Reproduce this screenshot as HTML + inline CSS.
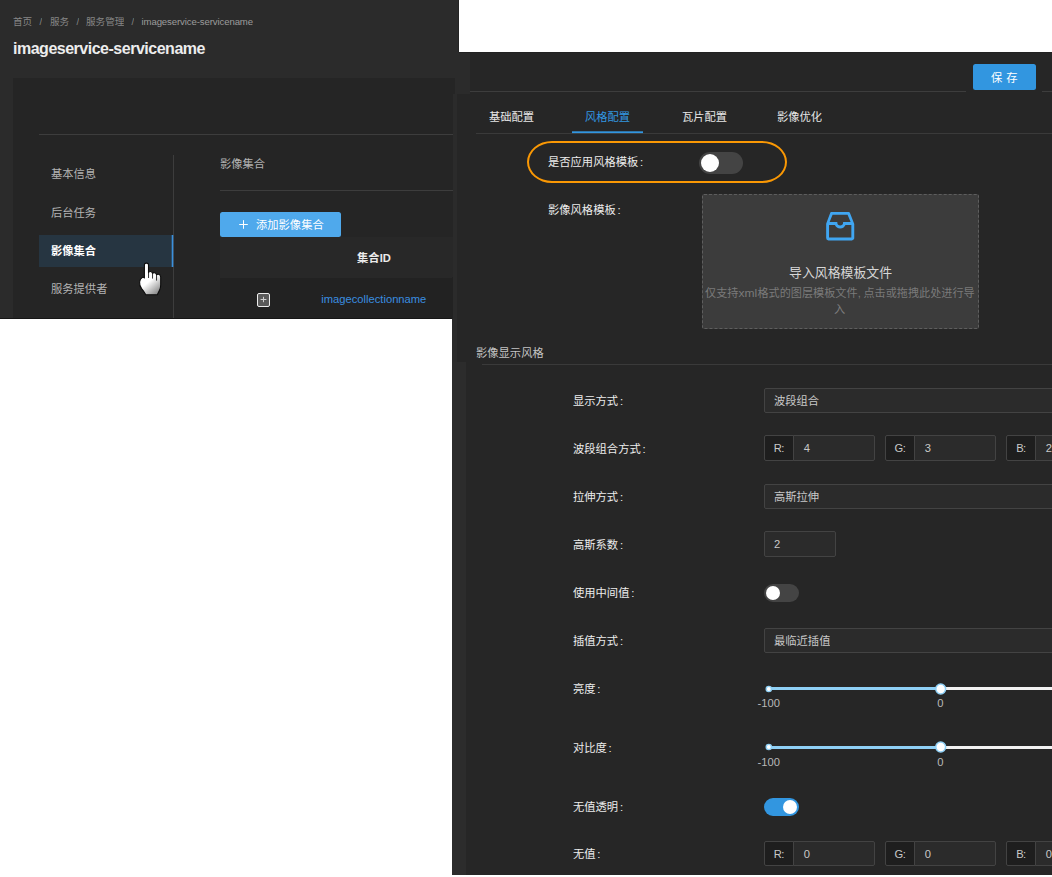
<!DOCTYPE html><html lang="zh"><head><meta charset="utf-8"><title>imageservice-servicename</title><style>html,body{margin:0;padding:0}body{width:1052px;height:877px;background:#fff;position:relative;overflow:hidden;font-family:"Liberation Sans",sans-serif;}div{box-sizing:content-box}svg text{font-family:"Liberation Sans","Noto Sans CJK SC",sans-serif;font-size:1000px}</style></head><body><div style="position:absolute;left:0;top:0;width:459px;height:319px;background:#2b2b2b;overflow:hidden"><svg role="img" aria-label="首页" style="position:absolute;left:13.00px;top:16.80px;" width="19.20" height="12.48" viewBox="0 -880 2000 1300" fill="#868686"><text x="0" y="0">首页</text></svg><svg role="img" aria-label="/" style="position:absolute;left:38.62px;top:16.80px;" width="3.76" height="12.48" viewBox="0 -880 392 1300" fill="#868686"><text x="196" y="0" text-anchor="middle">/</text></svg><svg role="img" aria-label="服务" style="position:absolute;left:49.50px;top:16.80px;" width="19.20" height="12.48" viewBox="0 -880 2000 1300" fill="#868686"><text x="0" y="0">服务</text></svg><svg role="img" aria-label="/" style="position:absolute;left:75.62px;top:16.80px;" width="3.76" height="12.48" viewBox="0 -880 392 1300" fill="#868686"><text x="196" y="0" text-anchor="middle">/</text></svg><svg role="img" aria-label="服务管理" style="position:absolute;left:86.00px;top:16.80px;" width="38.40" height="12.48" viewBox="0 -880 4000 1300" fill="#868686"><text x="0" y="0">服务管理</text></svg><svg role="img" aria-label="/" style="position:absolute;left:130.62px;top:16.80px;" width="3.76" height="12.48" viewBox="0 -880 392 1300" fill="#868686"><text x="196" y="0" text-anchor="middle">/</text></svg><div style="position:absolute;top:15.20px;line-height:14px;font-size:9.6px;font-weight:400;color:#9c9c9c;letter-spacing:-0.11px;white-space:pre;left:141.5px;">imageservice-servicename</div><div style="position:absolute;top:36.60px;line-height:24px;font-size:16px;font-weight:700;color:#ededed;letter-spacing:-0.49px;white-space:pre;left:13px;">imageservice-servicename</div><div style="position:absolute;left:13px;top:78px;width:442px;height:241px;background:#252525;"></div><div style="position:absolute;left:39px;top:134px;width:414px;height:1px;background:#3d3d3d;"></div><div style="position:absolute;left:173px;top:155px;width:1px;height:164px;background:#3d3d3d;"></div><svg role="img" aria-label="基本信息" style="position:absolute;left:51.25px;top:168.10px;" width="45.20" height="14.69" viewBox="0 -880 4000 1300" fill="#b3b3b3"><text x="0" y="0">基本信息</text></svg><svg role="img" aria-label="后台任务" style="position:absolute;left:51.25px;top:207.10px;" width="45.20" height="14.69" viewBox="0 -880 4000 1300" fill="#b3b3b3"><text x="0" y="0">后台任务</text></svg><div style="position:absolute;left:39px;top:235px;width:134px;height:32px;background:#263541;"></div><svg style="position:absolute;left:170px;top:234px" width="5" height="35"><rect x="1.70" y="1.00" width="1.6" height="32" rx="0" fill="#3a90dd"/></svg><svg role="img" aria-label="影像集合" style="position:absolute;left:51.25px;top:245.10px;" width="45.20" height="14.69" viewBox="0 -880 4000 1300" fill="#ffffff"><text x="0" y="0" font-weight="700">影像集合</text></svg><svg role="img" aria-label="服务提供者" style="position:absolute;left:51.25px;top:283.35px;" width="56.50" height="14.69" viewBox="0 -880 5000 1300" fill="#b3b3b3"><text x="0" y="0">服务提供者</text></svg><svg role="img" aria-label="影像集合" style="position:absolute;left:219.50px;top:158.35px;" width="45.20" height="14.69" viewBox="0 -880 4000 1300" fill="#b3b3b3"><text x="0" y="0">影像集合</text></svg><div style="position:absolute;left:220px;top:190px;width:233px;height:1px;background:#3d3d3d;"></div><div style="position:absolute;left:220px;top:212px;width:121px;height:25px;background:#4fa9ec;border-radius:2.5px;"></div><svg style="position:absolute;left:239px;top:220.3px" width="9" height="9" viewBox="0 0 9 9"><path d="M4.5 0.2V8.8M0.2 4.5H8.8" stroke="#fff" stroke-width="1" fill="none"/></svg><svg role="img" aria-label="添加影像集合" style="position:absolute;left:255.75px;top:218.95px;" width="67.80" height="14.69" viewBox="0 -880 6000 1300" fill="#ffffff"><text x="0" y="0">添加影像集合</text></svg><div style="position:absolute;left:220px;top:237px;width:233px;height:40.5px;background:#282828;"></div><div style="position:absolute;left:220px;top:277.5px;width:233px;height:41.5px;background:#222222;"></div><svg role="img" aria-label="集合" style="position:absolute;left:357.00px;top:252.35px;" width="22.60" height="14.69" viewBox="0 -880 2000 1300" fill="#ebebeb"><text x="0" y="0" font-weight="700">集合</text></svg><div style="position:absolute;top:250.00px;line-height:17px;font-size:11.2px;font-weight:700;color:#ebebeb;letter-spacing:-0.2px;white-space:pre;left:379.8px;">ID</div><div style="position:absolute;left:257px;top:293.3px;width:11px;height:11.6px;border:1px solid #ededed;border-radius:2px;background:#5a5a5a"></div><svg style="position:absolute;left:260px;top:296px" width="7" height="7" viewBox="0 0 7 7"><path d="M3.5 0.8V6.2M0.6 3.5H6.4" stroke="#d0d0d0" stroke-width="1" fill="none"/></svg><div style="position:absolute;top:290.50px;line-height:17px;font-size:11.2px;font-weight:400;color:#3a8ee0;letter-spacing:0px;white-space:pre;left:321.25px;">imagecollectionname</div><svg style="position:absolute;left:136px;top:260px" width="30" height="38" viewBox="0 0 30 38">
<defs><linearGradient id="hg" x1="0.2" y1="0" x2="0.75" y2="1"><stop offset="0.55" stop-color="#fff"/><stop offset="1" stop-color="#8c8c8c"/></linearGradient></defs>
<path d="M8.4 5 Q8.4 3.1 10.4 3.1 Q12.5 3.1 12.5 5 L12.5 12.6 Q12.8 11.4 14.5 11.5 Q16.3 11.6 16.5 13.4 Q17 12.5 18.5 12.7 Q20.3 12.9 20.5 14.8 Q21.2 14.1 22.5 14.3 Q24.6 14.7 24.7 17 L24.7 25 Q24.6 28.2 23.6 30 L21.3 34.7 L9.8 34.7 Q8 31.5 5.6 28.6 Q3.2 25.4 3.6 22 Q4 18.6 6.2 17.4 Q7.6 16.8 8.4 18 Z" fill="url(#hg)" stroke="#0c0c0c" stroke-width="1.1" stroke-linejoin="round"/>
<path d="M12.55 12.5V18M16.55 13.5V18.6M20.55 14.9V20.6" stroke="#1a1a1a" stroke-width="0.9" fill="none"/>
</svg><div style="position:absolute;left:0px;top:318px;width:452px;height:1px;background:#161616;"></div><div style="position:absolute;left:458px;top:0px;width:1px;height:52px;background:#242424;"></div></div><div style="position:absolute;left:452px;top:52px;width:600px;height:823px;background:#2b2b2b;overflow:hidden"><div style="position:absolute;left:-452px;top:-52px;width:1052px;height:877px"><div style="position:absolute;left:470px;top:52px;width:582px;height:42px;background:#262626;"></div><div style="position:absolute;left:459px;top:52px;width:593px;height:1px;background:#222222;"></div><div style="position:absolute;left:457px;top:94px;width:595px;height:781px;background:#262626;"></div><div style="position:absolute;left:452px;top:362px;width:14px;height:513px;background:#2c2c2c;"></div><div style="position:absolute;left:470px;top:91px;width:496px;height:1px;background:#3d3d3d;"></div><div style="position:absolute;left:1042px;top:91px;width:10px;height:1px;background:#3d3d3d;"></div><div style="position:absolute;left:973px;top:64px;width:63px;height:26px;background:#3296e0;border-radius:2.5px;"></div><svg role="img" aria-label="保存" style="position:absolute;left:991.36px;top:71.65px;" width="26.49" height="14.69" viewBox="0 -880 2344 1300" fill="#ffffff"><text x="0" y="0" letter-spacing="344">保存</text></svg><svg role="img" aria-label="基础配置" style="position:absolute;left:489.25px;top:111.45px;" width="45.20" height="14.69" viewBox="0 -880 4000 1300" fill="#e6e6e6"><text x="0" y="0">基础配置</text></svg><svg role="img" aria-label="风格配置" style="position:absolute;left:584.75px;top:111.45px;" width="45.20" height="14.69" viewBox="0 -880 4000 1300" fill="#3296e0"><text x="0" y="0">风格配置</text></svg><svg role="img" aria-label="瓦片配置" style="position:absolute;left:681.50px;top:111.45px;" width="45.20" height="14.69" viewBox="0 -880 4000 1300" fill="#e6e6e6"><text x="0" y="0">瓦片配置</text></svg><svg role="img" aria-label="影像优化" style="position:absolute;left:776.75px;top:111.45px;" width="45.20" height="14.69" viewBox="0 -880 4000 1300" fill="#e6e6e6"><text x="0" y="0">影像优化</text></svg><div style="position:absolute;left:476px;top:133px;width:576px;height:1px;background:#3a3a3a;"></div><svg style="position:absolute;left:571px;top:130px" width="74" height="5"><rect x="1.00" y="1.30" width="71" height="1.8" rx="0" fill="#3296e0"/></svg><div style="position:absolute;left:527px;top:141px;width:256.4px;height:38.2px;border:2.2px solid #fa9804;border-radius:25px / 21px"></div><svg role="img" aria-label="是否应用风格模板:" style="position:absolute;left:548.00px;top:156.15px;" width="95.24" height="14.69" viewBox="0 -880 8428 1300" fill="#ececec"><text x="0" y="0">是否应用风格模板<tspan x="8150">:</tspan></text></svg><div style="position:absolute;left:699px;top:152px;width:44px;height:22px;background:#444444;border-radius:11px;"></div><div style="position:absolute;left:701px;top:154px;width:18px;height:18px;background:#ffffff;border-radius:9px;"></div><svg role="img" aria-label="影像风格模板:" style="position:absolute;left:548.00px;top:204.15px;" width="72.64" height="14.69" viewBox="0 -880 6428 1300" fill="#ececec"><text x="0" y="0">影像风格模板<tspan x="6150">:</tspan></text></svg><div style="position:absolute;left:702px;top:193.6px;width:275px;height:133px;border:1px dashed #5e5e5e;border-radius:2px;background:#3c3c3c"></div><svg style="position:absolute;left:820.9px;top:207.1px" width="38.4" height="38.4" viewBox="0 0 1024 1024" fill="#40a6f2"><path d="M885.2 446.3l-.2-.8-112.2-285.1c-5-16.100-19.900-27.200-36.800-27.200H281.200c-17 0-32.100 11.300-36.900 27.600L139.400 443l-.3.700-.2.800c-1.300 4.900-1.700 9.900-1 14.800-.1 1.600-.2 3.200-.2 4.800V830a60.900 60.900 0 0 0 60.800 60.800h627.200c33.500 0 60.800-27.300 60.900-60.800V464.100c0-1.300 0-2.600-.1-3.700.4-4.900 0-9.600-1.300-14.100zm-295.800-43l-.3 15.700c-.8 44.900-31.800 75.100-77.100 75.100-22.100 0-41.100-7.100-54.800-20.600S436 441.200 435.600 419l-.3-15.700H229.500L309 210h399.200l81.700 193.300H589.400zm-375 76.800h157.300c24.300 57.100 76 90.800 140.400 90.800 33.700 0 65-9.400 90.300-27.200 22.200-15.600 39.500-37.400 50.700-63.600h156.500V814H214.400V480.100z"/></svg><svg role="img" aria-label="导入风格模板文件" style="position:absolute;left:788.90px;top:265.55px;" width="103.20" height="16.77" viewBox="0 -880 8000 1300" fill="#d6d6d6"><text x="0" y="0">导入风格模板文件</text></svg><svg role="img" aria-label="仅支持xml格式的图层模板文件, 点击或拖拽此处进行导" style="position:absolute;left:705.23px;top:287.23px;" width="269.94" height="14.50" viewBox="0 -880 24210 1300" fill="#7a7a7a"><text x="0" y="0">仅支持<tspan x="3000" textLength="1683" lengthAdjust="spacingAndGlyphs">xml</tspan><tspan x="4708">格式的图层模板文件</tspan><tspan x="13708">,</tspan><tspan x="14210">点击或拖拽此处进行导</tspan></text></svg><svg role="img" aria-label="入" style="position:absolute;left:834.40px;top:302.90px;" width="11.20" height="14.56" viewBox="0 -880 1000 1300" fill="#7d7d7d"><text x="0" y="0">入</text></svg><svg role="img" aria-label="影像显示风格" style="position:absolute;left:476.25px;top:346.95px;" width="67.80" height="14.69" viewBox="0 -880 6000 1300" fill="#c4c4c4"><text x="0" y="0">影像显示风格</text></svg><div style="position:absolute;left:482px;top:364px;width:570px;height:1px;background:#3a3a3a;"></div><svg role="img" aria-label="显示方式:" style="position:absolute;left:573.00px;top:395.10px;" width="50.04" height="14.69" viewBox="0 -880 4428 1300" fill="#ececec"><text x="0" y="0">显示方式<tspan x="4150">:</tspan></text></svg><svg role="img" aria-label="波段组合方式:" style="position:absolute;left:573.00px;top:442.60px;" width="72.64" height="14.69" viewBox="0 -880 6428 1300" fill="#ececec"><text x="0" y="0">波段组合方式<tspan x="6150">:</tspan></text></svg><svg role="img" aria-label="拉伸方式:" style="position:absolute;left:573.00px;top:490.85px;" width="50.04" height="14.69" viewBox="0 -880 4428 1300" fill="#ececec"><text x="0" y="0">拉伸方式<tspan x="4150">:</tspan></text></svg><svg role="img" aria-label="高斯系数:" style="position:absolute;left:573.00px;top:538.85px;" width="50.04" height="14.69" viewBox="0 -880 4428 1300" fill="#ececec"><text x="0" y="0">高斯系数<tspan x="4150">:</tspan></text></svg><svg role="img" aria-label="使用中间值:" style="position:absolute;left:573.00px;top:586.85px;" width="61.34" height="14.69" viewBox="0 -880 5428 1300" fill="#ececec"><text x="0" y="0">使用中间值<tspan x="5150">:</tspan></text></svg><svg role="img" aria-label="插值方式:" style="position:absolute;left:573.00px;top:635.10px;" width="50.04" height="14.69" viewBox="0 -880 4428 1300" fill="#ececec"><text x="0" y="0">插值方式<tspan x="4150">:</tspan></text></svg><svg role="img" aria-label="亮度:" style="position:absolute;left:573.00px;top:683.10px;" width="27.44" height="14.69" viewBox="0 -880 2428 1300" fill="#ececec"><text x="0" y="0">亮度<tspan x="2150">:</tspan></text></svg><svg role="img" aria-label="对比度:" style="position:absolute;left:573.00px;top:741.85px;" width="38.74" height="14.69" viewBox="0 -880 3428 1300" fill="#ececec"><text x="0" y="0">对比度<tspan x="3150">:</tspan></text></svg><svg role="img" aria-label="无值透明:" style="position:absolute;left:573.00px;top:800.60px;" width="50.04" height="14.69" viewBox="0 -880 4428 1300" fill="#ececec"><text x="0" y="0">无值透明<tspan x="4150">:</tspan></text></svg><svg role="img" aria-label="无值:" style="position:absolute;left:573.00px;top:848.35px;" width="27.44" height="14.69" viewBox="0 -880 2428 1300" fill="#ececec"><text x="0" y="0">无值<tspan x="2150">:</tspan></text></svg><div style="position:absolute;left:764.25px;top:388.0px;width:320px;height:23.4px;border:1px solid #434343;border-radius:2px;background:#2b2b2b"></div><svg role="img" aria-label="波段组合" style="position:absolute;left:773.75px;top:395.25px;" width="45.20" height="14.69" viewBox="0 -880 4000 1300" fill="#c8c8c8"><text x="0" y="0">波段组合</text></svg><div style="position:absolute;left:764.25px;top:435.3px;width:27.5px;height:23.4px;border:1px solid #434343;border-radius:2px 0 0 2px;background:#1e1e1e"></div><div style="position:absolute;left:792.95px;top:435.3px;width:80px;height:23.4px;border:1px solid #434343;border-radius:0 2px 2px 0;background:#2b2b2b"></div><div style="position:absolute;top:440.40px;line-height:17px;font-size:11.2px;font-weight:400;color:#c8c8c8;letter-spacing:-0.6px;white-space:pre;left:678.85px;width:200px;text-align:center;">R:</div><div style="position:absolute;top:440.40px;line-height:17px;font-size:11.2px;font-weight:400;color:#c8c8c8;letter-spacing:0px;white-space:pre;left:803.75px;">4</div><div style="position:absolute;left:885.25px;top:435.3px;width:27.5px;height:23.4px;border:1px solid #434343;border-radius:2px 0 0 2px;background:#1e1e1e"></div><div style="position:absolute;left:913.95px;top:435.3px;width:80px;height:23.4px;border:1px solid #434343;border-radius:0 2px 2px 0;background:#2b2b2b"></div><div style="position:absolute;top:440.40px;line-height:17px;font-size:11.2px;font-weight:400;color:#c8c8c8;letter-spacing:-0.6px;white-space:pre;left:799.85px;width:200px;text-align:center;">G:</div><div style="position:absolute;top:440.40px;line-height:17px;font-size:11.2px;font-weight:400;color:#c8c8c8;letter-spacing:0px;white-space:pre;left:924.75px;">3</div><div style="position:absolute;left:1006.25px;top:435.3px;width:27.5px;height:23.4px;border:1px solid #434343;border-radius:2px 0 0 2px;background:#1e1e1e"></div><div style="position:absolute;left:1034.95px;top:435.3px;width:80px;height:23.4px;border:1px solid #434343;border-radius:0 2px 2px 0;background:#2b2b2b"></div><div style="position:absolute;top:440.40px;line-height:17px;font-size:11.2px;font-weight:400;color:#c8c8c8;letter-spacing:-0.6px;white-space:pre;left:920.85px;width:200px;text-align:center;">B:</div><div style="position:absolute;top:440.40px;line-height:17px;font-size:11.2px;font-weight:400;color:#c8c8c8;letter-spacing:0px;white-space:pre;left:1045.75px;">2</div><div style="position:absolute;left:764.25px;top:484.0px;width:320px;height:23.4px;border:1px solid #434343;border-radius:2px;background:#2b2b2b"></div><svg role="img" aria-label="高斯拉伸" style="position:absolute;left:773.75px;top:491.25px;" width="45.20" height="14.69" viewBox="0 -880 4000 1300" fill="#c8c8c8"><text x="0" y="0">高斯拉伸</text></svg><div style="position:absolute;left:764.25px;top:531px;width:69.5px;height:24px;border:1px solid #434343;border-radius:2px;background:#2b2b2b"></div><div style="position:absolute;top:536.40px;line-height:17px;font-size:11.2px;font-weight:400;color:#c8c8c8;letter-spacing:0px;white-space:pre;left:774px;">2</div><div style="position:absolute;left:764.3px;top:583.85px;width:35px;height:17.8px;background:#444444;border-radius:9px;"></div><div style="position:absolute;left:765.9px;top:585.55px;width:14.4px;height:14.4px;background:#ffffff;border-radius:8px;"></div><div style="position:absolute;left:764.25px;top:628.0px;width:320px;height:23.4px;border:1px solid #434343;border-radius:2px;background:#2b2b2b"></div><svg role="img" aria-label="最临近插值" style="position:absolute;left:773.75px;top:635.25px;" width="56.50" height="14.69" viewBox="0 -880 5000 1300" fill="#c8c8c8"><text x="0" y="0">最临近插值</text></svg><div style="position:absolute;left:768.8px;top:687.0px;width:172px;height:3px;background:#8fd0f5;border-radius:2px 0 0 2px;"></div><div style="position:absolute;left:940.7px;top:687.0px;width:120px;height:3px;background:#f2f2f2;"></div><svg style="position:absolute;left:760px;top:680.5px" width="190" height="16"><circle cx="8.8" cy="8" r="2.6" fill="#fff" stroke="#8fd0f5" stroke-width="1.4"/><circle cx="180.7" cy="8" r="4.9" fill="#fff" stroke="#8fd0f5" stroke-width="1.5"/></svg><div style="position:absolute;top:694.70px;line-height:17px;font-size:11.2px;font-weight:400;color:#b8b8b8;letter-spacing:0px;white-space:pre;left:668.8px;width:200px;text-align:center;">-100</div><div style="position:absolute;top:694.70px;line-height:17px;font-size:11.2px;font-weight:400;color:#b8b8b8;letter-spacing:0px;white-space:pre;left:840.4px;width:200px;text-align:center;">0</div><div style="position:absolute;left:768.8px;top:745.9px;width:172px;height:3px;background:#8fd0f5;border-radius:2px 0 0 2px;"></div><div style="position:absolute;left:940.7px;top:745.9px;width:120px;height:3px;background:#f2f2f2;"></div><svg style="position:absolute;left:760px;top:739.4px" width="190" height="16"><circle cx="8.8" cy="8" r="2.6" fill="#fff" stroke="#8fd0f5" stroke-width="1.4"/><circle cx="180.7" cy="8" r="4.9" fill="#fff" stroke="#8fd0f5" stroke-width="1.5"/></svg><div style="position:absolute;top:753.60px;line-height:17px;font-size:11.2px;font-weight:400;color:#b8b8b8;letter-spacing:0px;white-space:pre;left:668.8px;width:200px;text-align:center;">-100</div><div style="position:absolute;top:753.60px;line-height:17px;font-size:11.2px;font-weight:400;color:#b8b8b8;letter-spacing:0px;white-space:pre;left:840.4px;width:200px;text-align:center;">0</div><div style="position:absolute;left:764.3px;top:798.1px;width:35px;height:17.8px;background:#3296e0;border-radius:9px;"></div><div style="position:absolute;left:783.1px;top:799.8px;width:14.4px;height:14.4px;background:#ffffff;border-radius:8px;"></div><div style="position:absolute;left:764.25px;top:841.05px;width:27.5px;height:23.4px;border:1px solid #434343;border-radius:2px 0 0 2px;background:#1e1e1e"></div><div style="position:absolute;left:792.95px;top:841.05px;width:80px;height:23.4px;border:1px solid #434343;border-radius:0 2px 2px 0;background:#2b2b2b"></div><div style="position:absolute;top:846.15px;line-height:17px;font-size:11.2px;font-weight:400;color:#c8c8c8;letter-spacing:-0.6px;white-space:pre;left:678.85px;width:200px;text-align:center;">R:</div><div style="position:absolute;top:846.15px;line-height:17px;font-size:11.2px;font-weight:400;color:#c8c8c8;letter-spacing:0px;white-space:pre;left:803.75px;">0</div><div style="position:absolute;left:885.25px;top:841.05px;width:27.5px;height:23.4px;border:1px solid #434343;border-radius:2px 0 0 2px;background:#1e1e1e"></div><div style="position:absolute;left:913.95px;top:841.05px;width:80px;height:23.4px;border:1px solid #434343;border-radius:0 2px 2px 0;background:#2b2b2b"></div><div style="position:absolute;top:846.15px;line-height:17px;font-size:11.2px;font-weight:400;color:#c8c8c8;letter-spacing:-0.6px;white-space:pre;left:799.85px;width:200px;text-align:center;">G:</div><div style="position:absolute;top:846.15px;line-height:17px;font-size:11.2px;font-weight:400;color:#c8c8c8;letter-spacing:0px;white-space:pre;left:924.75px;">0</div><div style="position:absolute;left:1006.25px;top:841.05px;width:27.5px;height:23.4px;border:1px solid #434343;border-radius:2px 0 0 2px;background:#1e1e1e"></div><div style="position:absolute;left:1034.95px;top:841.05px;width:80px;height:23.4px;border:1px solid #434343;border-radius:0 2px 2px 0;background:#2b2b2b"></div><div style="position:absolute;top:846.15px;line-height:17px;font-size:11.2px;font-weight:400;color:#c8c8c8;letter-spacing:-0.6px;white-space:pre;left:920.85px;width:200px;text-align:center;">B:</div><div style="position:absolute;top:846.15px;line-height:17px;font-size:11.2px;font-weight:400;color:#c8c8c8;letter-spacing:0px;white-space:pre;left:1045.75px;">0</div></div></div><div style="position:absolute;left:452px;top:78px;width:3px;height:16px;background:#252525;"></div><div style="position:absolute;left:452px;top:94px;width:1px;height:225px;background:#252525;"></div><div style="position:absolute;left:452px;top:134px;width:1px;height:1px;background:#3d3d3d;"></div><div style="position:absolute;left:452px;top:190px;width:1px;height:1px;background:#3d3d3d;"></div><div style="position:absolute;left:452px;top:237px;width:1px;height:40px;background:#282828;"></div><div style="position:absolute;left:452px;top:277px;width:1px;height:42px;background:#222222;"></div></body></html>
